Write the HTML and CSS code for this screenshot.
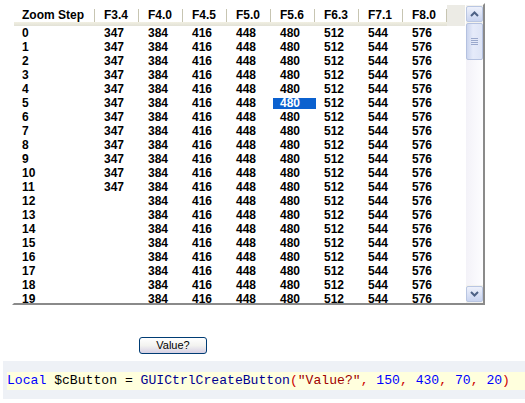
FILE: index.html
```html
<!DOCTYPE html>
<html>
<head>
<meta charset="utf-8">
<link rel="stylesheet" href="styles.css">
</head>
<body>
<div class="listview">
  <div class="lv-main">
    <div class="lv-head">
      <div class="hc first">Zoom Step</div>
      <div class="hc">F3.4</div>
      <div class="hc">F4.0</div>
      <div class="hc">F4.5</div>
      <div class="hc">F5.0</div>
      <div class="hc">F5.6</div>
      <div class="hc">F6.3</div>
      <div class="hc">F7.1</div>
      <div class="hc">F8.0</div>
      <div class="hc filler"></div>
    </div>
    <div class="lv-body" id="body"></div>
  </div>
  <div class="scrollbar">
    <div class="sb-btn"><svg width="9" height="6" viewBox="0 0 9 6"><path d="M1 5 L4.5 1.5 L8 5" fill="none" stroke="#4d6185" stroke-width="2"/></svg></div>
    <div class="sb-thumb"><span class="grip"></span><span class="grip"></span><span class="grip"></span><span class="grip"></span></div>
    <div class="sb-track"></div>
    <div class="sb-btn"><svg width="9" height="6" viewBox="0 0 9 6"><path d="M1 1 L4.5 4.5 L8 1" fill="none" stroke="#4d6185" stroke-width="2"/></svg></div>
  </div>
</div>
<div class="btn-row"><button class="xp-btn">Value?</button></div>
<div class="code-box">
  <div class="code-line"><span class="kw">Local</span> <span class="var">$cButton</span> <span class="op">=</span> <span class="fn">GUICtrlCreateButton</span><span class="pn">(</span><span class="str">"Value?"</span><span class="pn">,</span> <span class="num">150</span><span class="pn">,</span> <span class="num">430</span><span class="pn">,</span> <span class="num">70</span><span class="pn">,</span> <span class="num">20</span><span class="pn">)</span></div>
</div>
<script>
var vals=[347,384,416,448,480,512,544,576];
var body=document.getElementById('body');
for(var r=0;r<20;r++){
  var row=document.createElement('div');row.className='row';
  var c=document.createElement('div');c.className='c first';c.textContent=r;row.appendChild(c);
  for(var i=0;i<vals.length;i++){
    var d=document.createElement('div');d.className='c';
    if(i===0&&r>11){d.textContent='';}
    else if(r===5&&i===4){d.innerHTML='<span class="sel">'+vals[i]+'</span>';}
    else d.textContent=vals[i];
    row.appendChild(d);
  }
  body.appendChild(row);
}
</script>
</body>
</html>
```
FILE: styles.css
```css
html, body { margin: 0; padding: 0; background: #fff; }
body { font-family: "Liberation Sans", Arial, sans-serif; width: 525px; height: 403px; overflow: hidden; }

.listview {
  margin: 3px 0 0 12px;
  width: 469px;
  height: 298px;
  border-style: solid;
  border-width: 2px;
  border-color: #ffffff #8a8a8a #8a8a8a #ffffff;
  display: flex;
  background: #fff;
}
.lv-main { width: 451px; overflow: hidden; display: flex; flex-direction: column; }
.lv-head {
  display: flex;
  height: 21px;
  flex: none;
  background: linear-gradient(#ffffff 0, #ffffff 17px, #f1efe2 17px, #e2e1d6 21px);
}
.hc {
  width: 44px;
  box-sizing: border-box;
  padding-left: 9px;
  font-size: 12px;
  font-weight: bold;
  line-height: 20px;
  color: #000;
  position: relative;
  white-space: nowrap;
}
.hc::after {
  content: "";
  position: absolute;
  right: 0; top: 4px; width: 1px; height: 13px;
  background: #c7c5b2;
}
.hc.first { width: 81px; padding-left: 8px; }
.hc.filler { width: 18px; background: #ecebe5; }
.hc.filler::after { display: none; }

.lv-body { flex: 1; overflow: hidden; }
.row { display: flex; height: 14px; }
.c {
  width: 44px;
  box-sizing: border-box;
  padding-left: 9px;
  font-size: 12px;
  font-weight: bold;
  line-height: 14px;
  color: #000;
}
.c.first { width: 81px; padding-left: 8px; }
.sel {
  display: block;
  margin: 2px 0 0 -7px;
  padding-left: 7px;
  width: 36px;
  height: 11px;
  line-height: 11px;
  background: #0b61cf;
  color: #fff;
}

.scrollbar {
  width: 17px;
  margin-left: 1px;
  display: flex;
  flex-direction: column;
  background: #f3f2ee;
}
.sb-btn {
  height: 16px;
  box-sizing: border-box;
  border: 1px solid #b9c6e2;
  border-radius: 2px;
  background: linear-gradient(#eef1fb, #c9d4f0);
  display: flex; align-items: center; justify-content: center;
  margin: 1px 0;
}
.sb-thumb {
  height: 37px;
  box-sizing: border-box;
  border: 1px solid #b4c1e0;
  border-radius: 2px;
  background: linear-gradient(90deg, #cbd5ee, #e6ebfa 40%, #dde4f6);
  display: flex; flex-direction: column; align-items: center; justify-content: center; gap: 1px;
}
.grip { width: 7px; height: 1px; background: #9aa8cc; }
.sb-track { flex: 1; background: linear-gradient(90deg, #f3f2f8, #fdfdff); }

.btn-row { padding: 32px 0 0 139px; height: 17px; }
.xp-btn {
  width: 68px; height: 17px;
  box-sizing: border-box;
  border: 1px solid #003c74;
  border-radius: 3px;
  background: linear-gradient(#ffffff, #f3f3f0 50%, #d6d0e4);
  font-family: "Liberation Sans", Arial, sans-serif;
  font-size: 11px;
  color: #000;
  padding: 0;
  line-height: 15px;
  display: block;
}

.code-box {
  margin: 7px 0 0 3px;
  height: 38px;
  background: #eef1f6;
  padding-top: 11px;
  box-sizing: border-box;
}
.code-line {
  margin-left: 4px;
  height: 18px;
  background: #ffffdd;
  font-family: "Liberation Mono", "Courier New", monospace;
  font-size: 13.1px;
  line-height: 18px;
  white-space: pre;
  color: #000;
}
.kw { color: #0000ff; }
.var { color: #000; }
.op { color: #000; }
.fn { color: #000090; }
.pn { color: #cc0000; }
.str { color: #a00000; }
.num { color: #0000ff; }
```
